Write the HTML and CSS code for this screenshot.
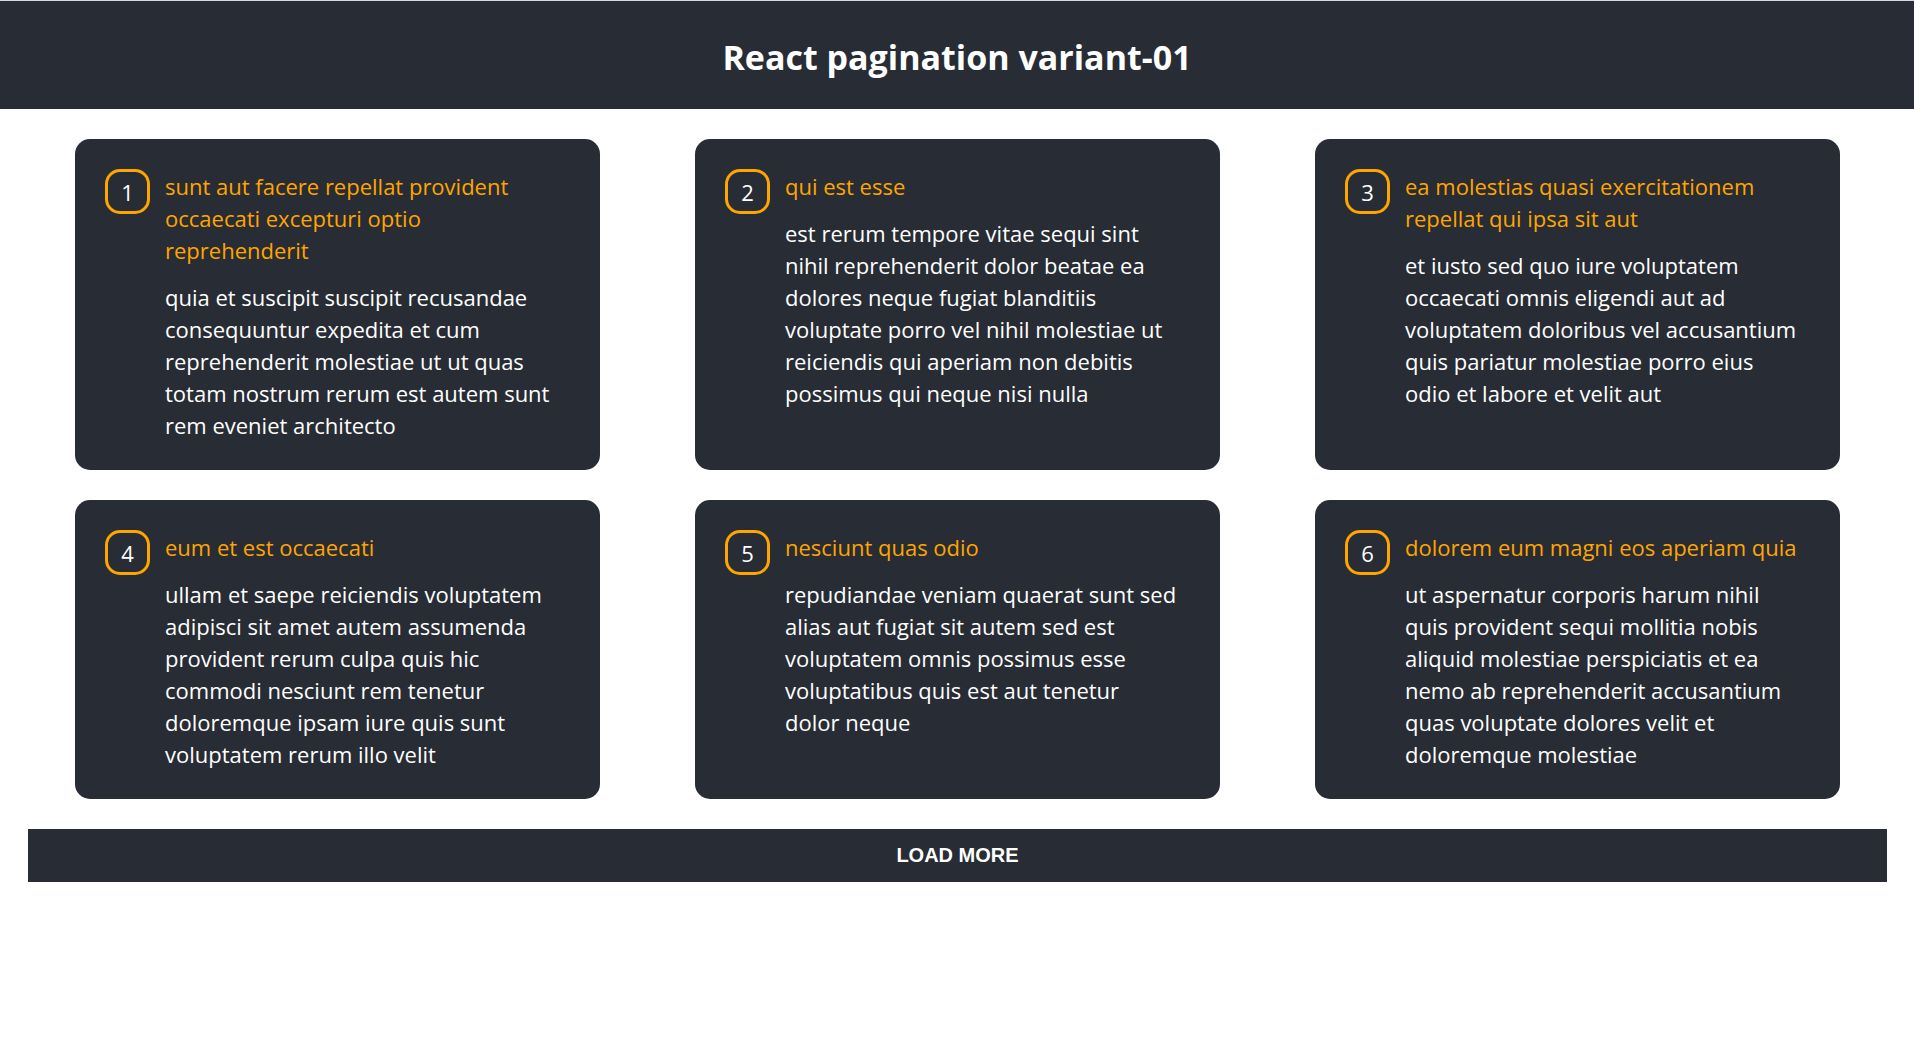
FILE: index.html
```
<!DOCTYPE html>
<html lang="en">
<head>
  <meta charset="utf-8">
  <meta name="viewport" content="width=device-width, initial-scale=1">
  <title>React pagination variant-01</title>
  <link rel="stylesheet" href="styles.css">
</head>
<body>
  <header class="header">
    <h1 class="header-title">React pagination variant-01</h1>
  </header>
  <main class="content">
    <section class="posts">
      <article class="card">
        <span class="card-id">1</span>
        <div class="card-body">
          <h2 class="card-title">sunt aut facere repellat provident occaecati excepturi optio reprehenderit</h2>
          <p class="card-text">quia et suscipit suscipit recusandae consequuntur expedita et cum reprehenderit molestiae ut ut quas totam nostrum rerum est autem sunt rem eveniet architecto</p>
        </div>
      </article>
      <article class="card">
        <span class="card-id">2</span>
        <div class="card-body">
          <h2 class="card-title">qui est esse</h2>
          <p class="card-text">est rerum tempore vitae sequi sint nihil reprehenderit dolor beatae ea dolores neque fugiat blanditiis voluptate porro vel nihil molestiae ut reiciendis qui aperiam non debitis possimus qui neque nisi nulla</p>
        </div>
      </article>
      <article class="card">
        <span class="card-id">3</span>
        <div class="card-body">
          <h2 class="card-title">ea molestias quasi exercitationem repellat qui ipsa sit aut</h2>
          <p class="card-text">et iusto sed quo iure voluptatem occaecati omnis eligendi aut ad voluptatem doloribus vel accusantium quis pariatur molestiae porro eius odio et labore et velit aut</p>
        </div>
      </article>
      <article class="card">
        <span class="card-id">4</span>
        <div class="card-body">
          <h2 class="card-title">eum et est occaecati</h2>
          <p class="card-text">ullam et saepe reiciendis voluptatem adipisci sit amet autem assumenda provident rerum culpa quis hic commodi nesciunt rem tenetur doloremque ipsam iure quis sunt voluptatem rerum illo velit</p>
        </div>
      </article>
      <article class="card">
        <span class="card-id">5</span>
        <div class="card-body">
          <h2 class="card-title">nesciunt quas odio</h2>
          <p class="card-text">repudiandae veniam quaerat sunt sed alias aut fugiat sit autem sed est voluptatem omnis possimus esse voluptatibus quis est aut tenetur dolor neque</p>
        </div>
      </article>
      <article class="card">
        <span class="card-id">6</span>
        <div class="card-body">
          <h2 class="card-title">dolorem eum magni eos aperiam quia</h2>
          <p class="card-text">ut aspernatur corporis harum nihil quis provident sequi mollitia nobis aliquid molestiae perspiciatis et ea nemo ab reprehenderit accusantium quas voluptate dolores velit et doloremque molestiae</p>
        </div>
      </article>
    </section>
    <button class="load-more" type="button">LOAD MORE</button>
  </main>
</body>
</html>
```

FILE: styles.css
```
* {
  box-sizing: border-box;
  margin: 0;
  padding: 0;
}

body {
  background: #fff;
  color: #fff;
  font-family: "Segoe UI", "Open Sans", "Noto Sans", sans-serif;
  font-size: 22px;
  line-height: 32px;
}

.header {
  padding: 32px 30px 28px;
  border-top: 1px solid #cfdbe3;
  background: #282c34;
  text-align: center;
}

.header-title {
  font-size: 34px;
  font-weight: 700;
  line-height: 48px;
}

.content {
  display: flex;
  flex-direction: column;
  gap: 30px;
  padding: 30px 27px 30px 28px;
}

.posts {
  display: grid;
  grid-template-columns: repeat(3, 1fr);
  gap: 30px 95px;
  padding: 0 47px;
}

.card {
  display: flex;
  align-items: flex-start;
  gap: 15px;
  padding: 30px 42px 29px 30px;
  border-radius: 15px;
  background: #282c34;
}

.card-id {
  display: flex;
  flex: none;
  align-items: center;
  justify-content: center;
  width: 45px;
  height: 45px;
  border: 3px solid orange;
  border-radius: 15px;
}

.card-body {
  display: flex;
  flex: 1;
  flex-direction: column;
  gap: 15px;
  min-width: 0;
  padding-top: 1px;
}

.card-title {
  color: orange;
  font-size: 22px;
  font-weight: 400;
}

.load-more {
  padding: 15px;
  border: 0;
  background: #282c34;
  color: #fff;
  font-family: Arial, "Liberation Sans", sans-serif;
  font-size: 20px;
  font-weight: 700;
  line-height: 23px;
  cursor: pointer;
}
```
